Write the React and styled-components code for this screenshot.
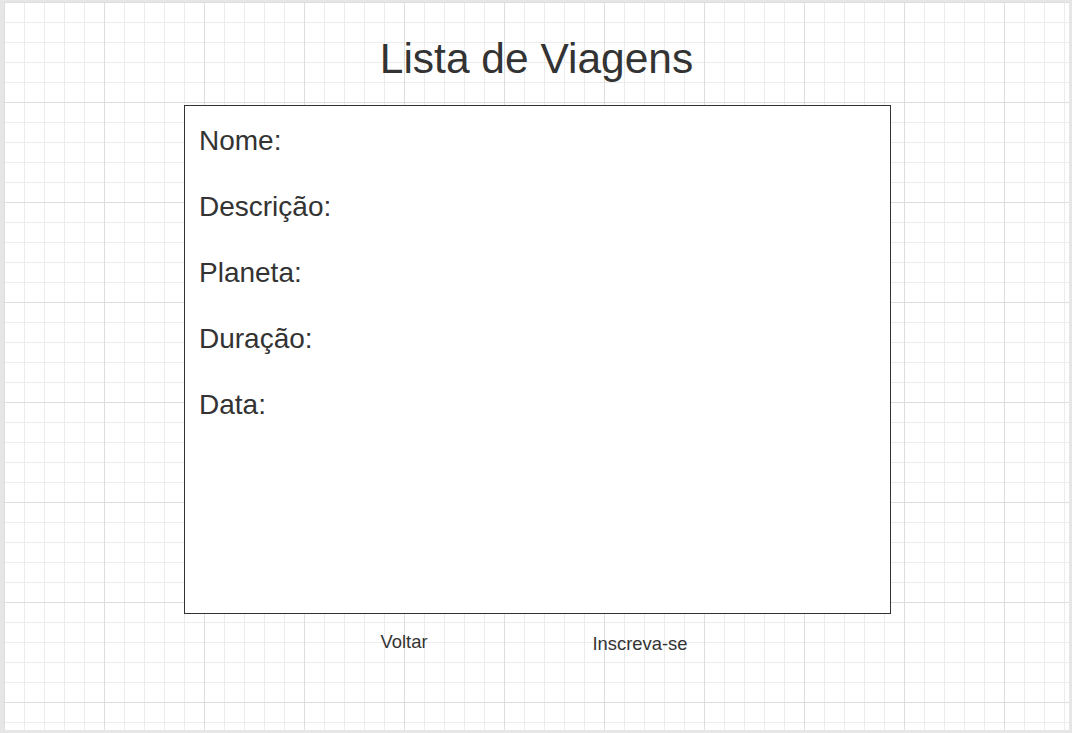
import styled, { createGlobalStyle } from "styled-components";

const GlobalStyle = createGlobalStyle`
  body {
    margin: 0;
    font-family: "Liberation Sans", Arial, sans-serif;
    color: #333333;
  }
`;

const Frame = styled.div`
  width: 1072px;
  height: 733px;
  box-sizing: border-box;
  padding: 2px 3px 3px 4px;
  background: #e6e6e6;
`;

const Canvas = styled.div`
  height: 100%;
  background-color: #ffffff;
  background-image:
    linear-gradient(to right, #dedede 1px, transparent 1px),
    linear-gradient(to bottom, #dedede 1px, transparent 1px),
    linear-gradient(to right, #ececec 1px, transparent 1px),
    linear-gradient(to bottom, #ececec 1px, transparent 1px);
  background-size: 100px 100px, 100px 100px, 20px 20px, 20px 20px;
  display: flex;
  flex-direction: column;
  overflow: hidden;
`;

const Title = styled.h1`
  margin: 36px 0 0;
  height: 42px;
  font-size: 42.5px;
  font-weight: normal;
  line-height: 42px;
  text-align: center;
`;

const Card = styled.div`
  margin: 25px 0 0 180px;
  width: 707px;
  height: 509px;
  box-sizing: border-box;
  border: 1px solid #333333;
  background: #ffffff;
  padding: 2px 0 0 14px;
  display: flex;
  flex-direction: column;
`;

const Field = styled.div`
  font-size: 28px;
  line-height: 66px;
`;

const Actions = styled.div`
  display: flex;
  gap: 116px;
  margin: 19px 0 0 340px;
  align-items: flex-start;
`;

const Action = styled.div`
  width: 120px;
  font-size: 18.4px;
  line-height: 18px;
  text-align: center;
  padding-top: ${(p) => p.$drop || 0}px;
  cursor: pointer;
`;

const fields = ["Nome:", "Descrição:", "Planeta:", "Duração:", "Data:"];

const App = () => (
  <>
    <GlobalStyle />
    <Frame>
      <Canvas>
        <Title>Lista de Viagens</Title>
        <Card>
          {fields.map((f) => (
            <Field key={f}>{f}</Field>
          ))}
        </Card>
        <Actions>
          <Action>Voltar</Action>
          <Action $drop={2}>Inscreva-se</Action>
        </Actions>
      </Canvas>
    </Frame>
  </>
);

export default App;
